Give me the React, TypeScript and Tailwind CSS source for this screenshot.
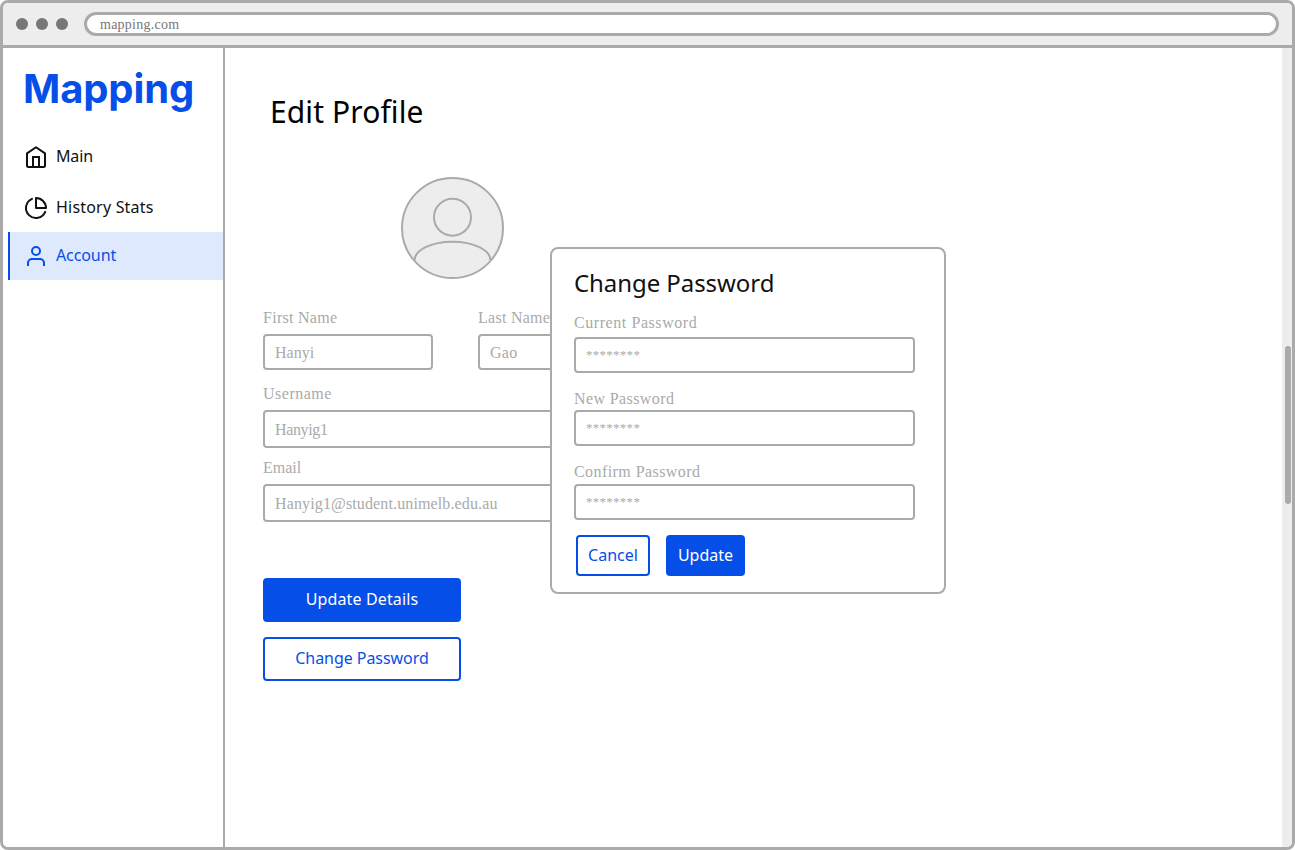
import React from "react";

const sans = "font-['Noto_Sans','Open_Sans',sans-serif]";
const serif = "font-['Liberation_Serif',serif]";

function HomeIcon() {
  return (
    <svg width="24" height="24" viewBox="0 0 24 24" fill="none" stroke="#111111" strokeWidth="2" strokeLinejoin="round" className="block shrink-0">
      <path d="M3 8.4L12 2.2l9 6.2V20.5a1.5 1.5 0 0 1-1.5 1.5h-15A1.5 1.5 0 0 1 3 20.5z" />
      <path d="M9 22V12h6v10" strokeLinejoin="miter" />
    </svg>
  );
}

function PieIcon() {
  return (
    <svg width="24" height="24" viewBox="0 0 24 24" fill="none" stroke="#111111" strokeWidth="2" strokeLinejoin="round" strokeLinecap="round" className="block shrink-0">
      <path d="M21.21 15.89A10 10 0 1 1 8 2.83" />
      <path d="M22 12A10 10 0 0 0 12 2v10z" />
    </svg>
  );
}

function UserIcon() {
  return (
    <svg width="24" height="24" viewBox="0 0 24 24" fill="none" stroke="#064ee8" strokeWidth="2" className="block shrink-0">
      <path d="M20 22v-3a4 4 0 0 0-4-4H8a4 4 0 0 0-4 4v3" />
      <circle cx="12" cy="7" r="4" />
    </svg>
  );
}

function Avatar() {
  return (
    <svg width="104" height="104" viewBox="0 0 104 104" fill="#ededed" stroke="#aaaaaa" strokeWidth="2" className="block">
      <ellipse cx="52.5" cy="52" rx="50.5" ry="50" />
      <circle cx="52.5" cy="41.2" r="18.5" />
      <path d="M14.5 84.5C14.5 74 31.5 65.7 52.5 65.7S90.5 74 90.5 84.5" />
    </svg>
  );
}

function Label({ children, className = "" }: { children: React.ReactNode; className?: string }) {
  return <label className={`${serif} block whitespace-nowrap text-[16px] leading-5 text-[#aaaaaa] ${className}`}>{children}</label>;
}

function Field({ children, className = "" }: { children: React.ReactNode; className?: string }) {
  return (
    <div className={`${serif} flex items-center rounded-[4px] border-2 border-[#aaaaaa] bg-white px-[10px] pt-[2px] text-[16px] leading-5 text-[#aaaaaa] ${className}`}>
      {children}
    </div>
  );
}

function Mask() {
  return <span className="pb-[2px] text-[13px] tracking-[0.27px]">********</span>;
}

function Sidebar() {
  return (
    <aside className={`${sans} flex w-[222px] shrink-0 flex-col border-r-2 border-[#aaaaaa] bg-white text-[16px] text-[#111111]`}>
      <h1 className="mt-[17px] ml-5 h-12 whitespace-nowrap font-['Inter',sans-serif] text-[40px] leading-12 font-bold tracking-[-0.12px] text-[#064ee8]">Mapping</h1>
      <nav className="mt-8 flex flex-col">
        <a className="flex h-6 items-center gap-2 pl-[21px]">
          <HomeIcon />
          <span className="pb-[2px] tracking-[-0.15px]">Main</span>
        </a>
        <a className="mt-[27px] flex h-6 items-center gap-2 pl-[21px]">
          <PieIcon />
          <span className="pb-[2px] tracking-[0.2px]">History Stats</span>
        </a>
        <a className="mt-3 ml-[5px] flex h-12 items-center gap-2 border-l-2 border-[#064ee8] bg-[#dfe9fe] pl-[14px] text-[#064ee8]">
          <UserIcon />
          <span className="pb-[2px] tracking-[-0.1px]">Account</span>
        </a>
      </nav>
    </aside>
  );
}

function PasswordDialog() {
  return (
    <section className="absolute top-[247px] left-[550px] flex h-[347px] w-[396px] flex-col rounded-[8px] border-2 border-[#aaaaaa] bg-white pr-[29px] pl-[22px]">
      <h2 className={`${sans} mt-[16px] h-9 whitespace-nowrap text-[24px] leading-9 tracking-[-0.07px] text-[#111111]`}>Change Password</h2>
      <Label className="mt-[12px] tracking-[0.57px]">Current Password</Label>
      <Field className="mt-[4px] h-9 shrink-0"><Mask /></Field>
      <Label className="mt-[16px] tracking-[0.4px]">New Password</Label>
      <Field className="mt-[1px] h-9 shrink-0"><Mask /></Field>
      <Label className="mt-[16px] tracking-[0.43px]">Confirm Password</Label>
      <Field className="mt-[2px] h-9 shrink-0"><Mask /></Field>
      <div className={`${sans} mt-[15px] ml-[2px] flex gap-4 text-[16px]`}>
        <button className="h-[41px] w-[74px] rounded-[4px] border-2 border-[#064ee8] bg-white pb-px text-[#064ee8]">Cancel</button>
        <button className="h-[41px] w-[79px] rounded-[4px] bg-[#064ee8] pb-px text-white">Update</button>
      </div>
    </section>
  );
}

export default function App() {
  return (
    <div className="relative h-[850px] w-[1295px] overflow-hidden bg-white">
      <div className="flex h-full flex-col overflow-hidden rounded-[8px] border-3 border-[#aaaaaa] bg-white">
        <header className="flex h-[45px] shrink-0 items-center border-b-3 border-[#aaaaaa] bg-[#ededed] pl-[13px]">
          <div className="flex gap-2">
            <i className="block size-3 rounded-full bg-[#777777]" />
            <i className="block size-3 rounded-full bg-[#777777]" />
            <i className="block size-3 rounded-full bg-[#777777]" />
          </div>
          <div className={`${serif} ml-4 flex h-6 w-[1195px] items-center rounded-full border-3 border-[#aaaaaa] bg-white pt-px pl-[13px] text-[14px] text-[#777777]`}>
            <span className="tracking-[0.25px]">mapping.com</span>
          </div>
        </header>
        <div className="flex min-h-0 flex-1">
          <Sidebar />
          <main className="flex flex-1 flex-col items-start pl-[38px]">
            <h2 className={`${sans} mt-[42px] ml-[7px] h-11 whitespace-nowrap text-[30px] leading-11 tracking-[0.1px] text-black`}>Edit Profile</h2>
            <div className="mt-[42px] ml-[137px]"><Avatar /></div>
            <div className="mt-[28px] flex gap-[45px]">
              <div className="w-[170px]">
                <Label className="tracking-[0.27px]">First Name</Label>
                <Field className="mt-[6px] h-9">Hanyi</Field>
              </div>
              <div className="w-[170px]">
                <Label className="tracking-[0.27px]">Last Name</Label>
                <Field className="mt-[6px] h-9 tracking-[0.3px]">Gao</Field>
              </div>
            </div>
            <Label className="mt-[14px] tracking-[0.5px]">Username</Label>
            <Field className="mt-[6px] h-[38px] w-[385px] tracking-[-0.35px]">Hanyig1</Field>
            <Label className="mt-[10px]">Email</Label>
            <Field className="mt-[6px] h-[38px] w-[385px] tracking-[0.13px]">Hanyig1@student.unimelb.edu.au</Field>
            <button className={`${sans} mt-14 h-11 w-[198px] rounded-[4px] bg-[#064ee8] pb-[2px] text-[16px] tracking-[0.13px] text-white`}>Update Details</button>
            <button className={`${sans} mt-[15px] h-11 w-[198px] rounded-[4px] border-2 border-[#064ee8] bg-white pb-[2px] text-[16px] tracking-[-0.06px] text-[#064ee8]`}>Change Password</button>
          </main>
          <div className="w-[10px] shrink-0 bg-[#ededed] pt-[298px] pl-[3px]">
            <div className="h-[158px] w-[6px] rounded-full bg-[#aaaaaa]" />
          </div>
        </div>
      </div>
      <PasswordDialog />
    </div>
  );
}
